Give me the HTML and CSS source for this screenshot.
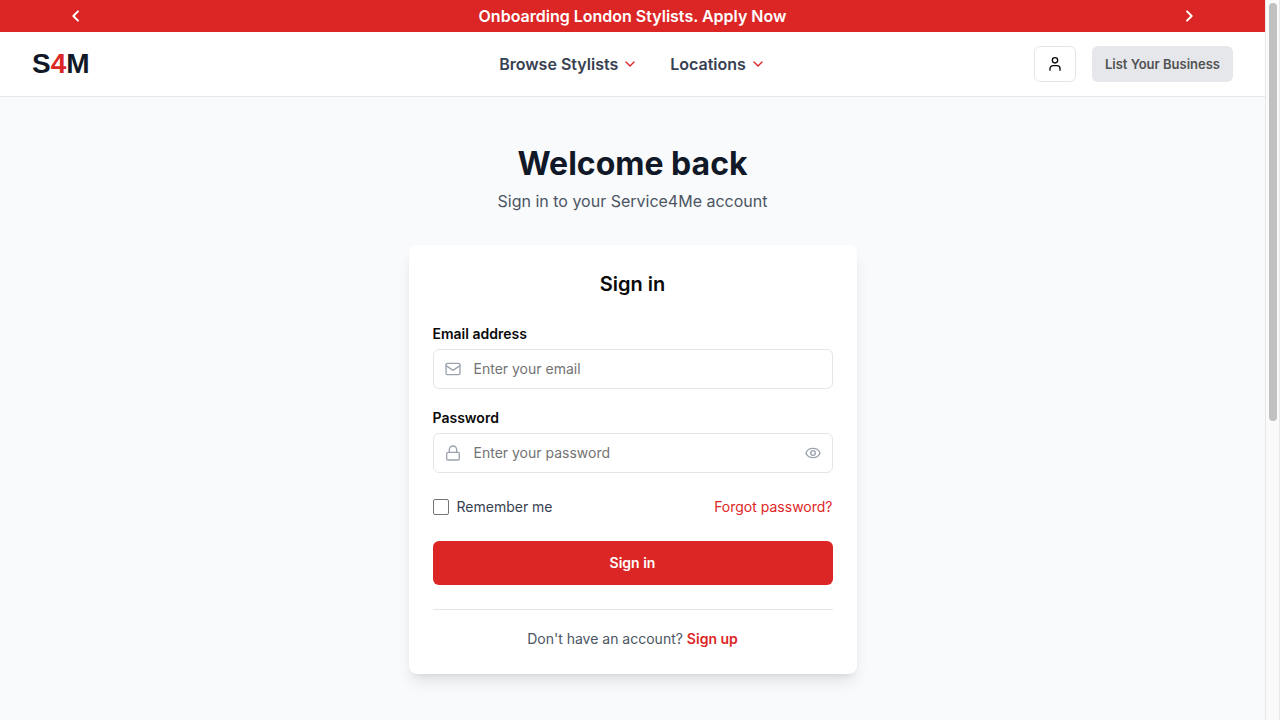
FILE: index.html
```html
<!DOCTYPE html>
<html lang="en">
<head>
<meta charset="utf-8">
<meta name="viewport" content="width=device-width, initial-scale=1">
<title>Sign in | Service4Me</title>
<link rel="stylesheet" href="styles.css">
</head>
<body>
<div class="page">
  <div class="promo">
    <button class="promo-arrow" type="button" aria-label="Previous announcement"><svg class="icon icon-bold" viewBox="0 0 24 24"><path d="m15 19-7-7 7-7"/></svg></button>
    <a class="promo-link" href="#">Onboarding London Stylists. Apply Now</a>
    <button class="promo-arrow" type="button" aria-label="Next announcement"><svg class="icon icon-bold" viewBox="0 0 24 24"><path d="m9 19 7-7-7-7"/></svg></button>
  </div>
  <header class="header">
    <a class="logo" href="#">S<span class="logo-accent">4</span>M</a>
    <nav class="nav">
      <button class="nav-item" type="button">Browse Stylists<svg class="icon nav-chevron" viewBox="0 0 24 24"><path d="m6 9 6 6 6-6"/></svg></button>
      <button class="nav-item" type="button">Locations<svg class="icon nav-chevron" viewBox="0 0 24 24"><path d="m6 9 6 6 6-6"/></svg></button>
    </nav>
    <div class="actions">
      <button class="user-button" type="button" aria-label="Account"><svg class="icon" viewBox="0 0 24 24"><circle cx="12" cy="6.500" r="4"/><path d="M4.500 21.500V19a4.500 4.500 0 0 1 4.500-4.500h6a4.500 4.500 0 0 1 4.500 4.500v2.500"/></svg></button>
      <button class="list-button" type="button">List Your Business</button>
    </div>
  </header>
  <main class="main">
    <h1 class="title">Welcome back</h1>
    <p class="subtitle">Sign in to your Service4Me account</p>
    <section class="card">
      <h2 class="card-title">Sign in</h2>
      <form>
        <div class="field">
          <label class="label" for="email">Email address</label>
          <div class="control">
            <svg class="icon" viewBox="0 0 24 24"><rect x="1.500" y="3.500" width="21" height="17" rx="2"/><path d="m1.500 7 9 6a2.500 2.500 0 0 0 3 0l9-6"/></svg>
            <input class="input" id="email" type="email" placeholder="Enter your email">
          </div>
        </div>
        <div class="field">
          <label class="label" for="password">Password</label>
          <div class="control">
            <svg class="icon" viewBox="0 0 24 24"><rect x="2.500" y="11" width="19" height="11.500" rx="2"/><path d="M6.500 11V7a5.500 5.500 0 0 1 11 0v4"/></svg>
            <input class="input" id="password" type="password" placeholder="Enter your password">
            <button class="reveal" type="button" aria-label="Show password"><svg class="icon" viewBox="0 0 24 24"><path d="M1.500 12C3 7.500 7 5 12 5s9 2.500 10.500 7c-1.500 4.500-5.500 7-10.500 7s-9-2.500-10.500-7Z"/><circle cx="12" cy="12" r="3.500"/></svg></button>
          </div>
        </div>
        <div class="options">
          <div class="remember">
            <input class="checkbox" id="remember" type="checkbox">
            <label for="remember">Remember me</label>
          </div>
          <a class="forgot" href="#">Forgot password?</a>
        </div>
        <button class="submit" type="submit">Sign in</button>
      </form>
      <p class="signup">Don't have an account? <a class="signup-link" href="#">Sign up</a></p>
    </section>
  </main>
</div>
<div class="scroll-track" aria-hidden="true"><div class="scroll-thumb"></div></div>
</body>
</html>
```
FILE: styles.css
```css
*, *::before, *::after { box-sizing: border-box; }
body {
  margin: 0;
  display: flex;
  min-height: 100vh;
  background: #f9fafb;
  color: #0a0a0a;
  font-family: Inter, "Liberation Sans", sans-serif;
  font-size: 14px;
  line-height: 22px;
}
h1, h2, p { margin: 0; }
a { color: inherit; text-decoration: none; }
button, input { font: inherit; color: inherit; }
button { border: 0; padding: 0; background: none; cursor: pointer; }
.icon {
  display: block;
  flex: none;
  width: 16px;
  height: 16px;
  fill: none;
  stroke: currentColor;
  stroke-width: 2;
  stroke-linecap: round;
  stroke-linejoin: round;
}
.icon-bold { stroke-width: 3; }
.page { flex: 1; min-width: 0; }

.promo {
  display: flex;
  align-items: center;
  justify-content: space-between;
  height: 32px;
  padding: 0 68px;
  background: #dc2626;
  color: #fff;
}
.promo-link { font-size: 16px; font-weight: 600; }

.header {
  display: grid;
  grid-template-columns: 1fr auto 1fr;
  align-items: center;
  height: 65px;
  padding: 0 32px;
  background: #fff;
  border-bottom: 1px solid #e5e7eb;
}
.logo {
  font-family: "Liberation Sans", sans-serif;
  font-size: 28px;
  font-weight: 700;
  line-height: 32px;
  color: #111827;
}
.logo-accent { color: #dc2626; }
.nav { display: flex; gap: 32px; }
.nav-item {
  display: flex;
  align-items: center;
  gap: 4px;
  font-size: 16px;
  font-weight: 600;
  color: #374151;
}
.nav-chevron { color: #dc2626; }
.actions { display: flex; justify-content: flex-end; gap: 16px; }
.user-button {
  display: grid;
  place-items: center;
  width: 42px;
  height: 36px;
  border: 1px solid #e5e5e5;
  border-radius: 6px;
}
.list-button {
  height: 36px;
  padding: 0 13px;
  border-radius: 6px;
  background: #e5e7eb;
  color: #525252;
  font-size: 13px;
  font-weight: 600;
}

.main { padding: 48px 16px; }
.title {
  font-size: 32px;
  font-weight: 700;
  line-height: 38px;
  text-align: center;
  color: #111827;
}
.subtitle {
  margin: 6px 0 32px;
  font-size: 16px;
  line-height: 24px;
  text-align: center;
  color: #4b5563;
}
.card {
  max-width: 448px;
  margin: 0 auto;
  padding: 24px;
  border-radius: 8px;
  background: #fff;
  box-shadow: 0 10px 15px -3px rgb(0 0 0 / 10%), 0 4px 6px -4px rgb(0 0 0 / 10%);
}
.card-title {
  margin-bottom: 24px;
  font-size: 20px;
  font-weight: 600;
  line-height: 30px;
  text-align: center;
}
.field { margin-bottom: 18px; }
.label { display: block; margin-bottom: 4px; font-weight: 600; }
.control {
  display: flex;
  align-items: center;
  height: 40px;
  padding: 0 11px;
  gap: 13px;
  border: 1px solid #e5e5e5;
  border-radius: 6px;
  color: #9ca3af;
}
.input {
  flex: 1;
  min-width: 0;
  padding: 0;
  border: 0;
  outline: 0;
  background: none;
  color: #0a0a0a;
}
.input::placeholder { color: #737373; opacity: 1; }
.options {
  display: flex;
  align-items: center;
  justify-content: space-between;
  margin: 24px 0;
  line-height: 20px;
}
.remember { display: flex; align-items: center; gap: 8px; color: #374151; }
.checkbox {
  appearance: none;
  width: 16px;
  height: 16px;
  margin: 0;
  border: 1px solid #767676;
  border-radius: 2px;
  background: #fff;
}
.checkbox:checked { background: #dc2626; }
.forgot, .signup-link { color: #dc2626; }
.submit {
  display: block;
  width: 100%;
  height: 44px;
  border-radius: 6px;
  background: #dc2626;
  color: #fff;
  font-weight: 600;
}
.signup {
  margin-top: 24px;
  padding-top: 18px;
  border-top: 1px solid #e5e5e5;
  text-align: center;
  color: #4b5563;
}
.signup-link { font-weight: 600; }

.scroll-track {
  width: 15px;
  padding: 3px;
  border: solid #e8e8e8;
  border-width: 0 1px;
  background: #fafafa;
}
.scroll-thumb { width: 8px; height: 58vh; border-radius: 4px; background: #c1c1c1; }
```
